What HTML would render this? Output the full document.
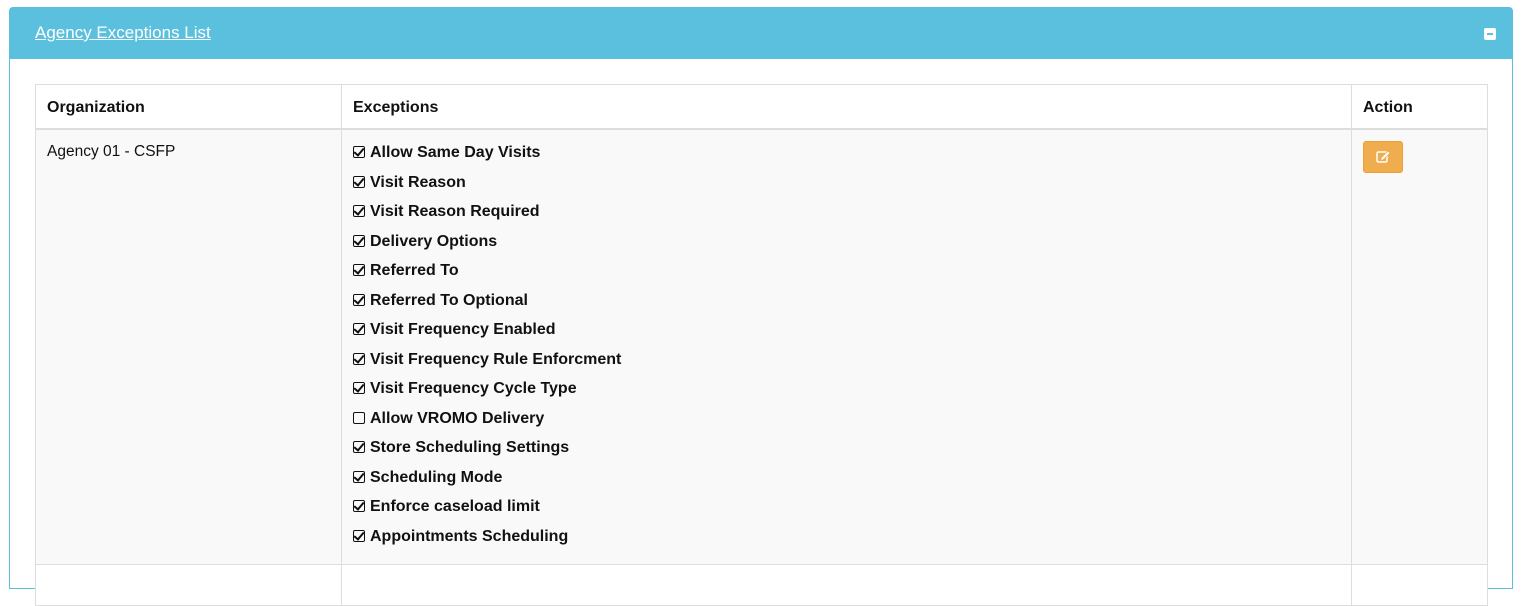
<!DOCTYPE html>
<html><head><style>
body{margin:0;background:#fff;font-family:"Liberation Sans",sans-serif;color:#111;overflow:hidden;}
.panel{position:absolute;left:9px;top:7px;width:1502px;height:580px;border:1px solid #5bc0de;border-radius:4px 4px 0 0;}
.hd{height:51px;background:#5bc0de;position:relative;}
.hd a{position:absolute;left:25px;top:15px;color:#fff;font-size:17px;text-decoration:underline;}
.mn{position:absolute;right:16px;top:20px;width:12px;height:12px;background:#fff;border-radius:2px;}
.mn:after{content:"";position:absolute;left:3px;top:5px;width:6px;height:2px;background:#5bc0de;}
table{position:absolute;left:25px;top:76px;width:1453px;border-collapse:collapse;font-size:15.5px;}
td,th{border:1px solid #ddd;text-align:left;vertical-align:top;}
th{height:40px;padding:3px 11px 0;vertical-align:middle;font-weight:bold;border-bottom:2px solid #ddd;font-size:16px;}
td{background:#f9f9f9;padding:8px 11px 12px;}
.it{line-height:29.5px;font-weight:bold;white-space:nowrap;font-size:16px;}
.cb{display:inline-block;width:10px;height:10px;border:1.5px solid #111;border-radius:2px;margin-right:5px;position:relative;top:1px;}
.cb.c:after{content:"";position:absolute;left:2px;top:-1px;width:4px;height:8px;border:solid #111;border-width:0 2.5px 2.5px 0;transform:rotate(40deg);}
.btn{width:38px;height:30px;background:#f0ad4e;border:1px solid #eea236;border-radius:3px;margin-top:3px;position:relative;}
</style></head><body>
<div class="panel">
<div class="hd"><a>Agency Exceptions List</a><div class="mn"></div></div>
<table>
<tr><th style="width:283px">Organization</th><th>Exceptions</th><th style="width:113px">Action</th></tr>
<tr><td style="padding-top:12px;line-height:20px">Agency 01 - CSFP</td>
<td style="height:414px">
<div class="it"><span class="cb c"></span>Allow Same Day Visits</div>
<div class="it"><span class="cb c"></span>Visit Reason</div>
<div class="it"><span class="cb c"></span>Visit Reason Required</div>
<div class="it"><span class="cb c"></span>Delivery Options</div>
<div class="it"><span class="cb c"></span>Referred To</div>
<div class="it"><span class="cb c"></span>Referred To Optional</div>
<div class="it"><span class="cb c"></span>Visit Frequency Enabled</div>
<div class="it"><span class="cb c"></span>Visit Frequency Rule Enforcment</div>
<div class="it"><span class="cb c"></span>Visit Frequency Cycle Type</div>
<div class="it"><span class="cb"></span>Allow VROMO Delivery</div>
<div class="it"><span class="cb c"></span>Store Scheduling Settings</div>
<div class="it"><span class="cb c"></span>Scheduling Mode</div>
<div class="it"><span class="cb c"></span>Enforce caseload limit</div>
<div class="it"><span class="cb c"></span>Appointments Scheduling</div>
</td>
<td><div class="btn"><svg width="38" height="30" viewBox="0 0 38 30"><rect x="13" y="10" width="10" height="10" rx="1.5" fill="none" stroke="#fff" stroke-width="1.5"/><path d="M17 16l7-7 2 2-7 7h-2z" fill="#fff" stroke="#f0ad4e" stroke-width="0.8"/></svg></div></td></tr>
<tr><td style="height:20px;background:#fff"></td><td style="background:#fff"></td><td style="background:#fff"></td></tr>
</table>
</div>
</body></html>
